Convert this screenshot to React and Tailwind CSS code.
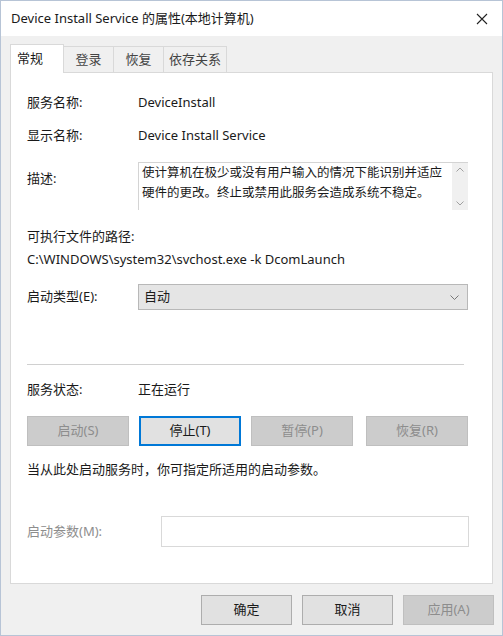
import React from "react";

const font = { fontFamily: '"Segoe UI", "Noto Sans", "Noto Sans CJK SC", sans-serif' };

function Btn({ children, disabled, focused, className = "" }) {
  return (
    <div
      className={`h-[30px] flex items-center justify-center text-[13px] border ${
        disabled
          ? "bg-[#cccccc] border-[#bfbfbf] text-[#8d8d8d]"
          : focused
          ? "bg-[#e1e1e1] border-[#0078d7] border-2 text-[#1a1a1a]"
          : "bg-[#e1e1e1] border-[#adadad] text-[#1a1a1a]"
      } ${className}`}
    >
      {children}
    </div>
  );
}

export default function App() {
  const tabs = ["登录", "恢复", "依存关系"];
  return (
    <div
      className="w-[503px] h-[636px] bg-[#f0f0f0] border border-[#b7c4d6] flex flex-col text-[#1a1a1a] overflow-hidden"
      style={font}
    >
      {/* title bar */}
      <div className="h-[35px] bg-white flex items-center justify-between pl-[10px] pr-[12px] shrink-0">
        <span className="text-[13px]">Device Install Service 的属性(本地计算机)</span>
        <svg width="12" height="12" viewBox="0 0 12 12" className="mr-[2px]">
          <path d="M1 1L11 11M11 1L1 11" stroke="#222" strokeWidth="1.1" />
        </svg>
      </div>

      {/* tabs */}
      <div className="flex items-end pl-[9px] mt-[8px] h-[28px] shrink-0">
        <div className="h-[29px] w-[54px] bg-white border border-b-0 border-[#d9d9d9] text-[13px] flex items-center pl-[6px] relative z-10 -mb-px">
          常规
        </div>
        {tabs.map((t) => (
          <div
            key={t}
            className={`h-[26px] ${t === "依存关系" ? "w-[63px]" : "w-[50px]"} bg-[#f0f0f0] border border-l-0 border-b-0 border-[#d9d9d9] text-[13px] text-[#444] flex items-center justify-center`}
          >
            {t}
          </div>
        ))}
      </div>

      {/* panel */}
      <div className="mx-[9px] h-[512px] bg-white border border-[#d9d9d9] pl-[16px] pr-[22px] text-[13px] shrink-0">
        <div className="flex items-center mt-[20px] h-[20px]">
          <span className="w-[111px]">服务名称:</span>
          <span>DeviceInstall</span>
        </div>
        <div className="flex items-center mt-[13px] h-[20px]">
          <span className="w-[111px]">显示名称:</span>
          <span>Device Install Service</span>
        </div>
        <div className="flex mt-[16px]">
          <span className="w-[111px] pt-[7px]">描述:</span>
          <div className="w-[330px] h-[48px] border border-[#d4d4d4] border-r-0 border-b-0 flex">
            <div className="flex-1 pl-[3px] leading-[20px] text-[12.5px]">
              使计算机在极少或没有用户输入的情况下能识别并适应硬件的更改。终止或禁用此服务会造成系统不稳定。
            </div>
            <div className="w-[16px] bg-[#f0f0f0] flex flex-col justify-between items-center py-[4px]">
              <svg width="8" height="5" viewBox="0 0 8 5">
                <path d="M0.5 4.5L4 1L7.5 4.5" stroke="#a0a0a0" fill="none" />
              </svg>
              <svg width="8" height="5" viewBox="0 0 8 5">
                <path d="M0.5 0.5L4 4L7.5 0.5" stroke="#a0a0a0" fill="none" />
              </svg>
            </div>
          </div>
        </div>
        <div className="mt-[17px] h-[20px] flex items-center">可执行文件的路径:</div>
        <div className="mt-[3px] h-[20px] flex items-center">C:\WINDOWS\system32\svchost.exe -k DcomLaunch</div>
        <div className="flex items-center mt-[14px]">
          <span className="w-[111px]">启动类型(E):</span>
          <div className="w-[330px] h-[26px] bg-[#e5e5e5] border border-[#b8b8b8] flex items-center justify-between pl-[5px] pr-[8px]">
            <span>自动</span>
            <svg width="9" height="5" viewBox="0 0 9 5">
              <path d="M0.5 0.5L4.5 4.5L8.5 0.5" stroke="#777" fill="none" />
            </svg>
          </div>
        </div>
        <div className="mt-[54px] h-px w-[437px] bg-[#d0d0d0]" />
        <div className="flex items-center mt-[15px] h-[20px]">
          <span className="w-[111px]">服务状态:</span>
          <span>正在运行</span>
        </div>
        <div className="flex mt-[16px]">
          <Btn disabled className="w-[102px]">启动(S)</Btn>
          <Btn focused className="w-[102px] ml-[10px]">停止(T)</Btn>
          <Btn disabled className="w-[102px] ml-[10px]">暂停(P)</Btn>
          <Btn disabled className="w-[102px] ml-[13px]">恢复(R)</Btn>
        </div>
        <div className="mt-[14px] h-[20px] flex items-center">当从此处启动服务时，你可指定所适用的启动参数。</div>
        <div className="flex items-center mt-[36px]">
          <span className="w-[134px] text-[#8d8d8d]">启动参数(M):</span>
          <div className="w-[308px] h-[31px] border border-[#d9d9d9] bg-white" />
        </div>
      </div>

      {/* footer buttons */}
      <div className="flex justify-end gap-[10px] pr-[8px] mt-[11px]">
        <Btn className="w-[91px]">确定</Btn>
        <Btn className="w-[91px]">取消</Btn>
        <Btn disabled className="w-[91px]">应用(A)</Btn>
      </div>
    </div>
  );
}
